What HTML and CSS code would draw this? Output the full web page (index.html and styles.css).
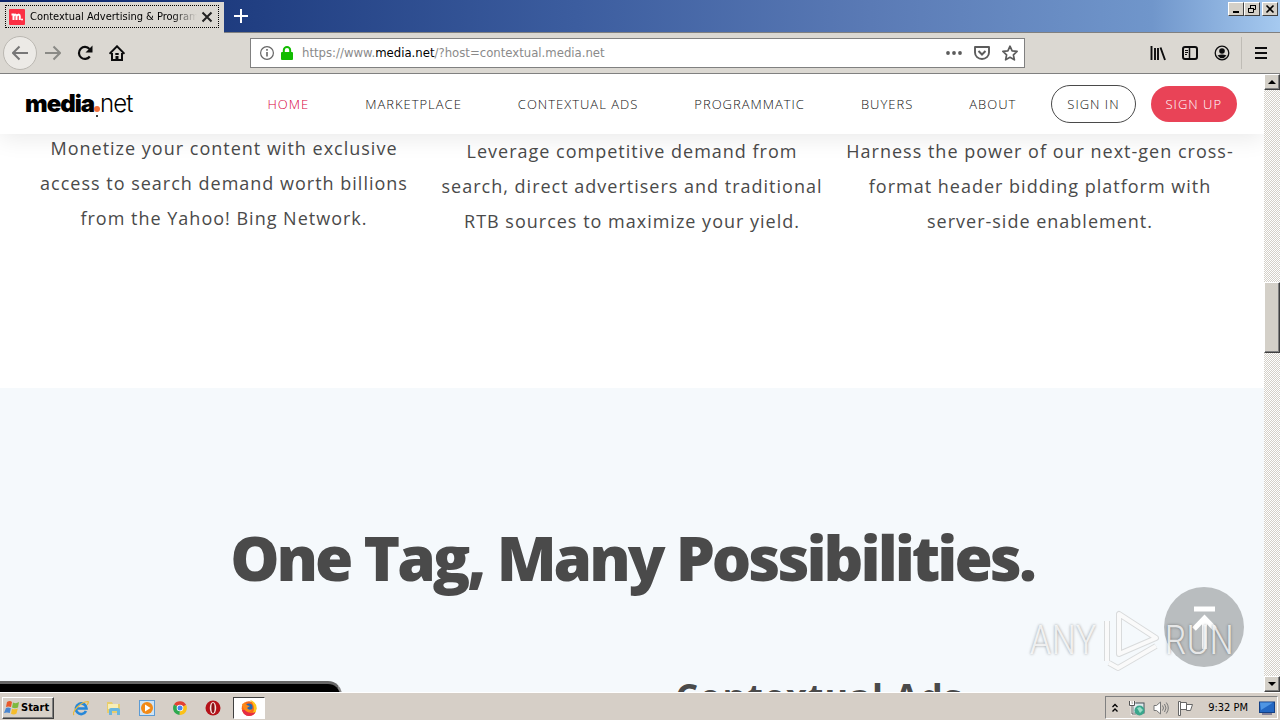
FILE: index.html
```html
<!DOCTYPE html>
<html lang="en">
<head>
<meta charset="utf-8">
<title>Contextual Advertising &amp; Programmatic</title>
<link rel="stylesheet" href="styles.css">
</head>
<body>
<div class="titlebar">
  <div class="tab">
    <div class="tab-inner">
      <svg class="favicon" width="16" height="16" viewBox="0 0 16 16"><rect width="16" height="16" rx="1" fill="#fb2f43"/><path d="M2.5 5.5H4.5V11M4.5 7Q7.5 4 7.5 7.5V11M7.5 7Q10.8 4 10.8 7.5V11" fill="none" stroke="#fff" stroke-width="2"/><circle cx="13" cy="10.5" r="1" fill="#fff"/></svg>
      <span class="tab-title">Contextual Advertising &amp; Programmatic</span>
      <button class="plain" aria-label="Close tab"><svg width="12" height="12" viewBox="0 0 12 12"><path d="M1.5 1.5l9 9M10.5 1.5l-9 9" stroke="#222" stroke-width="2"/></svg></button>
    </div>
  </div>
  <button class="plain new-tab" aria-label="New tab"><svg width="14" height="14" viewBox="0 0 14 14"><path d="M7 0v14M0 7h14" stroke="#fff" stroke-width="2"/></svg></button>
  <div class="window-buttons">
    <button class="win" aria-label="Minimize"><svg width="12" height="10" viewBox="0 0 12 10"><path d="M3 8h6" stroke="#000" stroke-width="2"/></svg></button>
    <button class="win" aria-label="Restore"><svg width="12" height="10" viewBox="0 0 12 10"><path d="M4.5 4V1.500h5v4H8M4 1.500h6M2.500 4.500h5v4h-5zM2 4.500h6" fill="none" stroke="#000"/></svg></button>
    <button class="win close" aria-label="Close"><svg width="12" height="10" viewBox="0 0 12 10"><path d="M2.500 1.500l7 7M9.500 1.500l-7 7" stroke="#000" stroke-width="1.600"/></svg></button>
  </div>
</div>
<div class="toolbar">
  <div class="nav-buttons">
    <button class="plain back" aria-label="Back"><svg width="16" height="16" viewBox="0 0 16 16"><path d="M16 8H1.500M7.500 1.500L1 8l6.500 6.500" fill="none" stroke="#777" stroke-width="2"/></svg></button>
    <button class="plain tool" aria-label="Forward"><svg width="16" height="16" viewBox="0 0 16 16"><path d="M0 8h14.500M8.500 1.500L15 8l-6.500 6.500" fill="none" stroke="#8a8a86" stroke-width="2"/></svg></button>
    <button class="plain tool" aria-label="Reload"><svg width="16" height="16" viewBox="0 0 16 16"><path d="M12.800 11.500A6 6 0 1 1 12.500 4" fill="none" stroke="#0c0c0d" stroke-width="2.200"/><path d="M15.500 0.500V7.500H8.500z" fill="#0c0c0d"/></svg></button>
    <button class="plain tool" aria-label="Home"><svg width="16" height="16" viewBox="0 0 16 16"><path d="M0.500 8.800L8 1.300l7.500 7.500" fill="none" stroke="#0c0c0d" stroke-width="2"/><path d="M3 8v7h10V8" fill="none" stroke="#0c0c0d" stroke-width="2"/><path d="M6.300 8h3.400v2H6.300zM6.500 11h3v4h-3z" fill="#0c0c0d"/></svg></button>
  </div>
  <div class="urlbar">
    <svg width="14" height="14" viewBox="0 0 14 14"><circle cx="7" cy="7" r="6.400" fill="none" stroke="#666" stroke-width="1.200"/><path d="M7 6v4.500M7 3v1.700" stroke="#666" stroke-width="1.600"/></svg>
    <svg class="lock" width="12" height="14" viewBox="0 0 12 14"><rect y="6" width="12" height="8" rx="1" fill="#12bc00"/><path d="M2.800 7V4.200a3.200 3.200 0 0 1 6.400 0V7" fill="none" stroke="#12bc00" stroke-width="2"/></svg>
    <div class="url">https://www.<b>media.net</b>/?host=contextual.media.net</div>
    <button class="plain" aria-label="Page actions"><svg width="16" height="16" viewBox="0 0 16 16" fill="#5c5c5c"><circle cx="2" cy="8" r="1.900"/><circle cx="8" cy="8" r="1.900"/><circle cx="14" cy="8" r="1.900"/></svg></button>
    <button class="plain" aria-label="Save to Pocket"><svg width="16" height="16" viewBox="0 0 16 16" fill="none" stroke="#5c5c5c"><path d="M1 2h14v5.500a7 6.500 0 0 1-14 0z" stroke-width="1.900" stroke-linejoin="round"/><path d="M4.500 6L8 9.500 11.500 6" stroke-width="2"/></svg></button>
    <button class="plain" aria-label="Bookmark"><svg width="16" height="16" viewBox="0 0 16 16"><path d="M8 1.200l2.100 4.600 5 .6-3.700 3.400 1 5L8 12.300l-4.400 2.500 1-5L.9 6.400l5-.6z" fill="none" stroke="#5c5c5c" stroke-width="1.700" stroke-linejoin="round"/></svg></button>
  </div>
  <div class="tools">
    <button class="plain" aria-label="Library"><svg width="16" height="16" viewBox="0 0 16 16"><path d="M1.500 1v14M5 3v12M8 3v12M10.500 2.500L15 15" stroke="#0c0c0d" stroke-width="1.900"/></svg></button>
    <button class="plain" aria-label="Sidebars"><svg width="16" height="16" viewBox="0 0 16 16"><rect x="1" y="2" width="14" height="12" rx="2" fill="none" stroke="#0c0c0d" stroke-width="2"/><path d="M7.500 2v12" stroke="#0c0c0d" stroke-width="1.500"/><path d="M3 5.500h3M3 7.500h3M3 9.500h2" stroke="#0c0c0d"/></svg></button>
    <button class="plain" aria-label="Account"><svg width="16" height="16" viewBox="0 0 16 16"><circle cx="8" cy="8" r="6.800" fill="none" stroke="#0c0c0d" stroke-width="1.300"/><circle cx="8" cy="6" r="2.800" fill="#0c0c0d"/><path d="M3.500 10.500Q8 8.500 12.500 10.500Q8 16 3.500 10.500z" fill="#0c0c0d"/></svg></button>
    <span class="separator"></span>
    <button class="plain" aria-label="Menu"><svg width="16" height="16" viewBox="0 0 16 16"><path d="M2 3h12M2 8h12M2 13h12" stroke="#0c0c0d" stroke-width="2"/></svg></button>
  </div>
</div>
<div class="viewport">
  <div class="page">
    <header class="site-header">
      <a class="logo" href="#"><span class="logo-bold">media</span><span class="logo-dot"></span><span class="logo-light">net</span></a>
      <nav class="site-nav">
        <a class="active" href="#">HOME</a>
        <a href="#">MARKETPLACE</a>
        <a href="#">CONTEXTUAL ADS</a>
        <a href="#">PROGRAMMATIC</a>
        <a href="#">BUYERS</a>
        <a href="#">ABOUT</a>
      </nav>
      <div class="auth"><a class="pill outline" href="#">SIGN IN</a><a class="pill solid" href="#">SIGN UP</a></div>
    </header>
    <section class="features">
      <p>Monetize your content with exclusive<br>access to search demand worth billions<br>from the Yahoo! Bing Network.</p>
      <p class="lower">Leverage competitive demand from<br>search, direct advertisers and traditional<br>RTB sources to maximize your yield.</p>
      <p class="lower">Harness the power of our next-gen cross-<br>format header bidding platform with<br>server-side enablement.</p>
    </section>
    <section class="one-tag">
      <h2>One Tag, Many Possibilities.</h2>
      <div class="showcase">
        <div class="device"></div>
        <h3>Contextual Ads</h3>
      </div>
    </section>
    <button class="plain to-top" aria-label="Back to top"><svg width="80" height="80" viewBox="0 0 80 80"><path d="M30 22h21M40.500 62V32M30 42l10.500-11L51 42" fill="none" stroke="#fff" stroke-width="5"/></svg></button>
    <div class="watermark">
      <span>ANY</span>
      <svg width="58" height="64" viewBox="0 0 58 64"><g fill="none" stroke="#d9dbdc" stroke-width="6" stroke-linejoin="round"><path d="M5 12v40M17 5v40L54 29z"/><path d="M7 54l9 5 38-22"/></g><g fill="none" stroke="#fafafa" stroke-width="4" stroke-linejoin="round"><path d="M5 12v40M17 5v40L54 29z"/><path d="M7 54l9 5 38-22"/></g></svg>
      <span>RUN</span>
    </div>
  </div>
  <div class="scrollbar">
    <button class="scroll-btn" aria-label="Scroll up"><svg width="8" height="4" viewBox="0 0 8 4"><path d="M0 4l4-4 4 4z"/></svg></button>
    <div class="track"><div class="thumb"></div></div>
    <button class="scroll-btn" aria-label="Scroll down"><svg width="8" height="4" viewBox="0 0 8 4"><path d="M0 0l4 4 4-4z"/></svg></button>
  </div>
</div>
<div class="taskbar">
  <button class="start"><svg width="16" height="16" viewBox="0 0 16 16"><path d="M3 2Q6 0 8 2L7 7Q4 6 2 7z" fill="#e8592b"/><path d="M9 2.500Q12 4 15 2L14 7.500Q11 9 8 7.500z" fill="#7db93f"/><path d="M2 8Q4 7 6.800 8.200L5.800 13Q3 12 0 13z" fill="#4a86d0"/><path d="M8 8.800Q11 10 13.800 8.500L12.500 13.500Q10 15.500 7 13.800z" fill="#f5bd2c"/></svg>Start</button>
  <div class="launchers">
    <button class="plain" aria-label="Internet Explorer"><svg width="16" height="16" viewBox="0 0 16 16"><path d="M13 11A5.300 5.300 0 1 1 13.500 8.500H4" fill="none" stroke="#2687d8" stroke-width="2.700"/><path d="M1 15Q-1 13 4 7.500T15 1.500Q16 2.500 14 5" fill="none" stroke="#e9b93a" stroke-width="1.200"/></svg></button>
    <button class="plain" aria-label="Explorer"><svg width="16" height="16" viewBox="0 0 16 16"><path d="M1 2h5l1 2h7v9H1z" fill="#e8cd6c"/><path d="M2 4h10v5H2z" fill="#f8eeb5"/><path d="M3 15v-5q0-2 2-2h7q2 0 2 2v5h-3v-4H6v4z" fill="#69b6df"/></svg></button>
    <button class="plain" aria-label="Media Player"><svg width="16" height="16" viewBox="0 0 16 16"><rect x=".5" y=".5" width="15" height="15" fill="#cfe4f5" stroke="#5c9bd4"/><circle cx="8" cy="8" r="6" fill="#f28a17"/><path d="M6 4.500v7L11.500 8z" fill="#fff"/></svg></button>
    <button class="plain" aria-label="Chrome"><svg width="16" height="16" viewBox="0 0 16 16"><path d="M8 8L2 4.500A7 7 0 0 1 14.200 5z" fill="#e34133"/><path d="M8 8L14.200 5A7 7 0 0 1 7.500 15z" fill="#fbc116"/><path d="M8 8L7.500 15A7 7 0 0 1 2 4.500z" fill="#2da94f"/><circle cx="8" cy="8" r="3.300" fill="#fff"/><circle cx="8" cy="8" r="2.500" fill="#4586ef"/></svg></button>
    <button class="plain" aria-label="Opera"><svg width="16" height="16" viewBox="0 0 16 16"><circle cx="8" cy="8" r="7.500" fill="#b51219"/><ellipse cx="8" cy="8" rx="3.200" ry="6" fill="#f6e5df"/><ellipse cx="8" cy="8" rx="1.600" ry="5" fill="#8b1015"/></svg></button>
    <button class="plain running" aria-label="Firefox"><svg width="16" height="16" viewBox="0 0 16 16"><circle cx="8" cy="8.500" r="7.300" fill="#fa6b18"/><path d="M9 0q7 2 6.500 9A7 7 0 0 1 8 15.500q5-2 5-7Q13 4 9 0z" fill="#ffc61a"/><path d="M1 10q2 6 7 6 5 0 6.500-4Q8 15 4 10z" fill="#e52d45"/><circle cx="8" cy="7" r="3.600" fill="#2467b5"/><path d="M1 4q2 0 3-2 0 3 5 4L6 8q2 3 5 1-2 5-6 2Q2 9 1 4z" fill="#fb8a1b"/></svg></button>
  </div>
  <div class="tray">
    <svg width="8" height="10" viewBox="0 0 8 10"><path d="M1.500 4L4 1.500 6.500 4M1.500 8.500L4 6l2.500 2.500" fill="none" stroke="#000" stroke-width="1.300"/></svg>
    <svg class="net" width="16" height="16" viewBox="0 0 16 16"><rect x="4" y="3" width="11" height="10" fill="#dfe9ec" stroke="#47525a"/><path d="M1 1v4h4V1M3 5v9h4" fill="none" stroke="#fff" stroke-width="2.500"/><path d="M.5 1v4.500h5V1M3 5.500V14h4" fill="none" stroke="#555"/><circle cx="10.500" cy="10.500" r="5" fill="#3aa68c"/><path d="M8 8l3-1 3 3-3 3z" fill="#99dcc7"/></svg>
    <svg width="16" height="16" viewBox="0 0 16 16" fill="none" stroke="#777"><path d="M1 5.500h2.500L7.500 2v12l-4-3.500H1z" fill="#fff"/><path d="M9.500 5.500q2 2.500 0 5M11.500 4q3 4 0 8M13.300 2.500q4 5.500 0 11"/></svg>
    <svg width="16" height="16" viewBox="0 0 16 16" fill="#fff" stroke="#666"><path d="M1.500 1.500h2v14h-2zM3.500 2.500h6v7h-6zM9.500 4.500h6l-2 6H9.500z"/></svg>
    <time>9:32 PM</time>
    <svg width="16" height="14" viewBox="0 0 16 14"><rect x=".5" y="1" width="15" height="10.500" fill="#2367c2" stroke="#123f85"/><path d="M1 1.500h13L2 9z" fill="#4f95e3"/><path d="M3 13h10" stroke="#668" stroke-width="1.500"/></svg>
  </div>
</div>
</body>
</html>
```
FILE: styles.css
```css
* { box-sizing: border-box; }
html, body { height: 100%; }
body {
  margin: 0;
  display: flex;
  flex-direction: column;
  overflow: hidden;
  background: #fff;
  font-family: "Open Sans", "Noto Sans", sans-serif;
  color: #4a4a4a;
}
a { color: inherit; text-decoration: none; }
svg { display: block; flex: none; }
.plain { border: 0; padding: 0; background: none; display: flex; align-items: center; justify-content: center; flex: none; }

/* Browser window */
.titlebar {
  flex: none;
  height: 33px;
  display: flex;
  align-items: flex-start;
  background: linear-gradient(90deg, #0a246a 0, #213f82 20%, #3c5d9f 45%, #5a7ab5 68%, #7096cb 90%, #a6caf0 100%);
  border-bottom: 1px solid #808080;
}
.tab { width: 224px; height: 33px; margin-top: 2px; padding: 3px 5px; background: #dbd8d2; }
.tab-inner { height: 23px; display: flex; align-items: center; padding: 0 5px 0 3px; border: 1px dotted #000; }
.tab-title {
  flex: 1;
  min-width: 0;
  margin: 0 4px 0 5px;
  overflow: hidden;
  white-space: nowrap;
  font: 11px/16px "DejaVu Sans Condensed", "DejaVu Sans", sans-serif;
  color: #000;
  -webkit-mask-image: linear-gradient(90deg, #000 85%, transparent);
  mask-image: linear-gradient(90deg, #000 85%, transparent);
}
.new-tab { width: 34px; height: 32px; }
.window-buttons { margin-left: auto; display: flex; padding: 2px 2px 0 0; }
.win {
  width: 16px; height: 14px; padding: 0;
  display: flex; align-items: center; justify-content: center;
  background: #d4d0c8;
  border: 1px solid;
  border-color: #fff #404040 #404040 #fff;
}
.win.close { margin-left: 2px; }
.toolbar { flex: none; height: 41px; display: flex; align-items: center; background: #dbd8d2; border-bottom: 1px solid #808080; }
.nav-buttons { width: 250px; display: flex; align-items: center; padding-left: 3px; }
.back { width: 34px; height: 34px; border: 1px solid #bbb8b2; border-radius: 50%; background: #eceae6; }
.tool { width: 32px; height: 32px; }
.urlbar {
  flex: 1; min-width: 0;
  height: 30px;
  display: flex; align-items: center; gap: 12px;
  padding: 0 6px 0 9px;
  background: #fff;
  border: 1px solid #808080;
}
.lock { margin-left: -5px; }
.url { flex: 1; min-width: 0; margin-left: -3px; overflow: hidden; white-space: nowrap; font: 13px/20px "DejaVu Sans Condensed", "DejaVu Sans", sans-serif; color: #8a8a8a; }
.url b { font-weight: 400; color: #000; }
.tools { width: 255px; display: flex; align-items: center; justify-content: flex-end; gap: 16px; padding-right: 11px; }
.separator { width: 1px; height: 32px; margin: 0 -5px 0 -5px; background: #bfbcb6; }

/* Web page */
.viewport { flex: 1; min-height: 0; display: flex; }
.page { flex: 1; min-width: 0; position: relative; overflow: hidden; background: #fff; }
.site-header {
  position: absolute; top: 0; left: 0; right: 0; z-index: 2;
  height: 60px;
  display: flex; align-items: center;
  padding: 0 27px 0 25px;
  background: #fff;
  box-shadow: 0 4px 24px rgba(0, 0, 0, .09);
}
.logo { display: flex; align-items: baseline; color: #000; line-height: 24px; }
.logo-bold { font: 900 24px/24px Inter, "Open Sans", sans-serif; letter-spacing: -1px; }
.logo-dot { width: 6px; height: 6px; border-radius: 50%; background: #f0703c; box-shadow: 0 7px 0 -2px #000; }
.logo-light { font: 300 24px/24px Inter, "Open Sans", sans-serif; letter-spacing: -1px; }
.site-nav { margin-left: auto; display: flex; gap: 56px; }
.site-nav a, .pill { font-size: 13px; line-height: 18px; font-weight: 300; letter-spacing: 1px; color: #111; white-space: nowrap; }
.site-nav a.active { color: #d8003c; }
.auth { display: flex; align-items: center; gap: 15px; margin-left: 35px; }
.site-header .pill { padding: 9px 15px; border-radius: 19px; }
.pill.outline { border: 1px solid #4a4a4a; }
.site-header .pill.solid { background: #e94357; color: #fff; }
.features { height: 314px; display: grid; grid-template-columns: repeat(3, 1fr); padding: 57px 20px 0; }
.features p { margin: 0; text-align: center; white-space: nowrap; font-size: 18px; line-height: 35px; letter-spacing: 1px; }
.features .lower { padding-top: 3px; }
.one-tag { padding-top: 125px; background: #f5f9fc; }
.one-tag h2 { margin: 0; text-align: center; font-size: 62px; line-height: 88px; font-weight: 800; letter-spacing: -3px; }
.showcase { display: grid; grid-template-columns: 342px 1fr; align-items: start; padding-top: 72px; }
.device { margin-top: 8px; height: 300px; background: #000; border-top: 3px solid #666; border-right: 2px solid #888; border-radius: 0 14px 0 0; }
.showcase h3 { margin: 0; padding-left: 32px; text-align: center; font-size: 36px; line-height: 48px; font-weight: 700; letter-spacing: 1px; }
.to-top { position: absolute; right: 20px; bottom: 25px; width: 80px; height: 80px; border-radius: 50%; background: #b9bdbf; }
.watermark {
  position: absolute; right: 30px; bottom: 19px;
  display: flex; align-items: center; gap: 5px;
  font: 300 40px/64px "Roboto Condensed", "Open Sans Condensed", "Liberation Sans", sans-serif;
  color: rgba(255, 255, 255, .8);
  text-shadow: 0 0 3px rgba(0, 0, 0, .4);
}

/* Scrollbar */
.scrollbar { flex: none; width: 16px; display: flex; flex-direction: column; background: repeating-conic-gradient(#d4d0c8 0 25%, #fff 0 50%) 0 0 / 2px 2px; }
.scroll-btn, .thumb { background: #d4d0c8; border: 1px solid; border-color: #fff #404040 #404040 #fff; box-shadow: inset -1px -1px #808080; }
.scroll-btn { width: 16px; height: 16px; padding: 0; display: flex; align-items: center; justify-content: center; flex: none; }
.track { flex: 1; padding-top: 192px; }
.thumb { height: 71px; }

/* Taskbar */
.taskbar { flex: none; height: 28px; display: flex; align-items: center; padding: 2px 2px 0; background: #d6cfc7; border-top: 1px solid #fff; }
.start {
  display: flex; align-items: center; gap: 1px;
  width: 52px; height: 22px; padding: 0 1px;
  background: #d6d0c8; border: 1px solid; border-color: #fff #404040 #404040 #fff; box-shadow: inset -1px -1px #808080;
  font: 700 11px/16px "DejaVu Sans Condensed", "DejaVu Sans", sans-serif; color: #000;
}
.launchers { display: flex; align-items: center; margin-left: 10px; }
.launchers .plain { width: 33px; height: 22px; }
.launchers .running { margin-left: 4px; width: 32px; background: #fff; border: 1px solid; border-color: #404040 #fff #fff #404040; }
.tray {
  margin-left: auto; height: 23px;
  display: flex; align-items: center; gap: 8px;
  padding: 0 2px 0 5px;
  border: 1px solid; border-color: #808080 #fff #fff #808080;
  font: 11px/16px "DejaVu Sans Condensed", "DejaVu Sans", sans-serif; color: #000;
}
.tray .net { margin-left: 2px; }
.tray time { margin: 0 3px 0 7px; white-space: nowrap; }
```
